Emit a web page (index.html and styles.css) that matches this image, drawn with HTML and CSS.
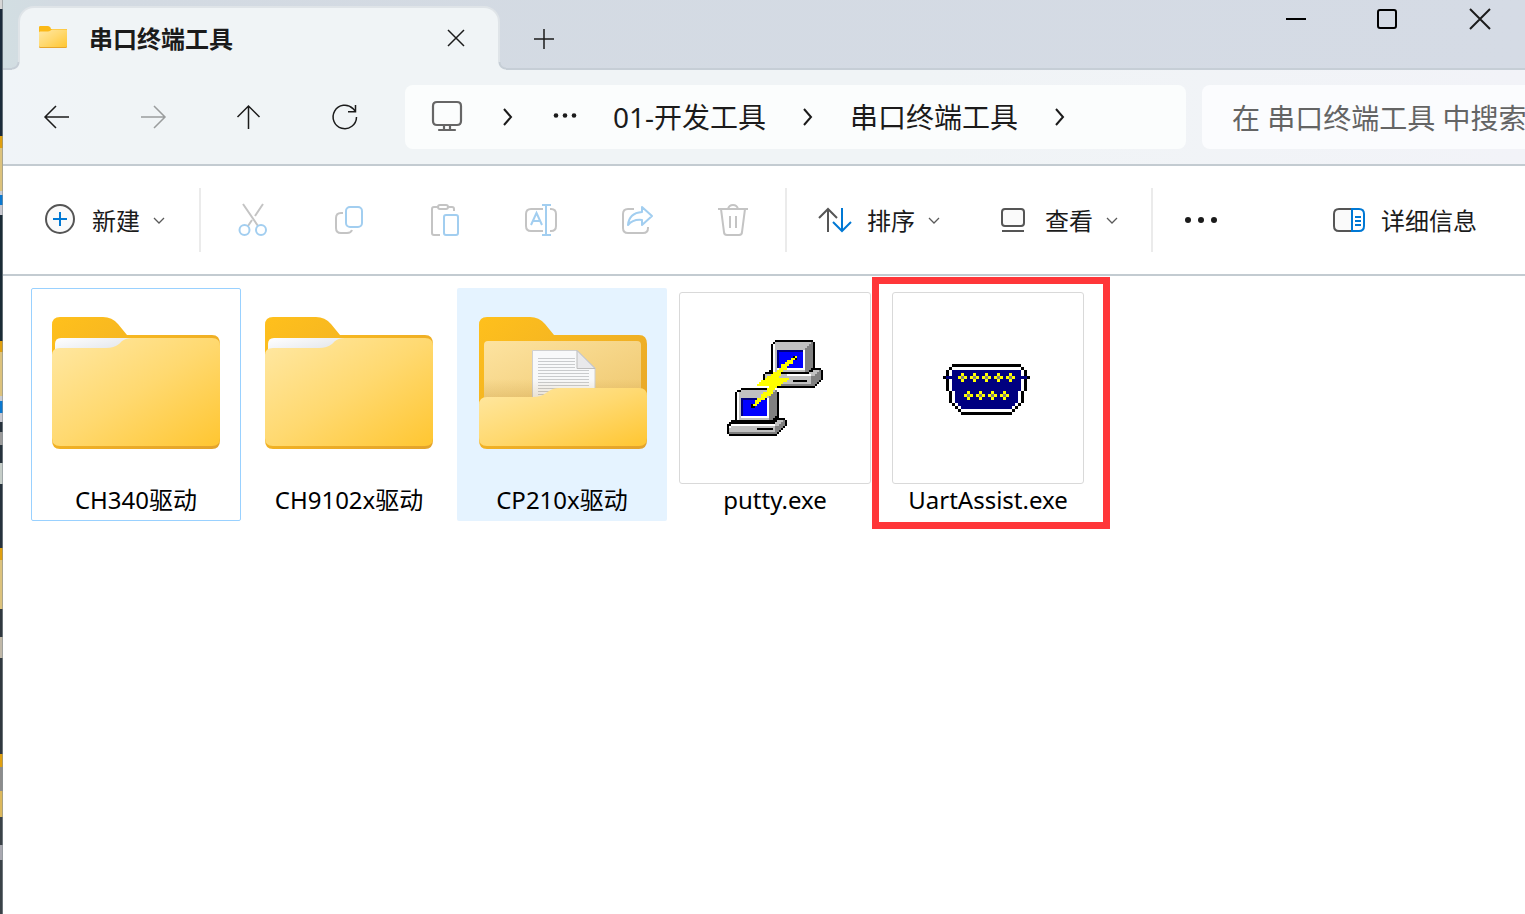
FILE: index.html
```html
<!DOCTYPE html>
<html lang="zh-CN">
<head>
<meta charset="utf-8">
<title>串口终端工具</title>
<link rel="stylesheet" href="styles.css">
</head>
<body>
<svg class="defs" width="0" height="0" aria-hidden="true">
  <defs>
    <linearGradient id="back" x1="0" y1="0" x2="1" y2="1"><stop offset="0" stop-color="#ffc01c"/><stop offset="1" stop-color="#e3a32c"/></linearGradient>
    <linearGradient id="front" x1="0" y1="0" x2="1" y2="1"><stop offset="0" stop-color="#ffe8a4"/><stop offset=".5" stop-color="#ffd970"/><stop offset="1" stop-color="#ffc631"/></linearGradient>
    <linearGradient id="paper" x1="0" y1="0" x2="1" y2="1"><stop offset="0" stop-color="#fff"/><stop offset="1" stop-color="#d9dde4"/></linearGradient>
    <linearGradient id="inner" x1="0" y1="0" x2="1" y2="1"><stop offset="0" stop-color="#fde3a0"/><stop offset="1" stop-color="#eec66c"/></linearGradient>
    <linearGradient id="shade" x1="0" y1="0" x2="0" y2="1"><stop offset="0" stop-color="#a06b10" stop-opacity="0"/><stop offset="1" stop-color="#a06b10" stop-opacity=".2"/></linearGradient>
    <symbol id="folder" viewBox="0 0 192 192">
      <g transform="translate(12 25)">
        <path fill="url(#back)" d="M0 8Q0 0 8 0H51Q60 0 66 7L75 18H160Q168 18 168 27V123Q168 132 160 132H8Q0 132 0 123Z"/>
        <path fill="url(#paper)" d="M3 40V27Q3 21 9 21H80L66 40Z"/>
        <path fill="url(#front)" d="M0 38Q0 31 8 31H54Q62 31 67 27L70 24Q74 21 80 21H160Q168 21 168 29V121Q168 129 160 129H8Q0 129 0 121Z"/>
      </g>
    </symbol>
    <symbol id="folder-open" viewBox="0 0 192 192">
      <g transform="translate(13 25)">
        <path fill="url(#back)" d="M0 8Q0 0 8 0H51Q60 0 66 7L75 18H160Q168 18 168 27V123Q168 132 160 132H8Q0 132 0 123Z"/>
        <rect x="5" y="24" width="157" height="70" rx="4" fill="url(#inner)"/>
        <path fill="#f8f9fa" stroke="#cfcfcf" d="M53.500 33.500H98L116 51V90H53.500Z"/>
        <path stroke="#c9cbcd" stroke-width="1" d="M59 41.500H96M59 44.500H96M59 47.500H96M59 50.500H96M59 53.500H110M59 56.500H110M59 59.500H110M59 62.500H110M59 65.500H110M59 68.500H110M59 71.500H110M59 74.500H110M59 77.500H110"/>
        <path fill="#e9e9eb" stroke="#bdbdbd" d="M98 33.500V51.500H116Z"/>
        <path fill="url(#shade)" d="M5 62H162V84H5Z"/>
        <path fill="url(#front)" d="M0 88Q0 80 8 80H54Q62 80 67 76L70 74Q74 71 80 71H160Q168 71 168 79V121Q168 129 160 129H8Q0 129 0 121Z"/>
      </g>
    </symbol>
    <symbol id="chevron-right" viewBox="0 0 24 24"><path class="line" d="M8 4L15 12L8 20"/></symbol>
    <symbol id="chevron-down" viewBox="0 0 12 12"><path d="M1 4L6 9L11 4" fill="none" stroke="#5a5a5a" stroke-width="1.300"/></symbol>
  </defs>
</svg>
<div class="desktop-edge"></div>
<main class="window">
  <header class="titlebar">
    <div class="tab">
      <svg class="tab-folder" viewBox="12 25 168 133" preserveAspectRatio="none" aria-hidden="true">
        <path fill="#fbb917" d="M12 33Q12 25 20 25H63Q72 25 80 33L84 43H180V100H12Z"/>
        <path fill="#e7a62c" d="M12 100H180V150Q180 158 172 158H20Q12 158 12 150Z"/>
        <path fill="url(#front)" d="M12 65Q12 58 20 58H66Q74 58 79 54L90 46H180V146Q180 152 172 152H20Q12 152 12 146Z"/>
      </svg>
      <h1 class="tab-title">串口终端工具</h1>
      <button class="tab-close" aria-label="关闭标签页"><svg viewBox="0 0 20 20" width="20" height="20"><path class="thin" d="M2 1L18 17M18 1L2 17"/></svg></button>
    </div>
    <button class="tab-new" aria-label="新标签页"><svg viewBox="0 0 20 20" width="20" height="20"><path class="thin" d="M0 10H20M10 0V20"/></svg></button>
    <div class="window-controls">
      <button aria-label="最小化"><svg viewBox="0 0 20 20" width="20" height="20"><path class="control" d="M0 10H20"/></svg></button>
      <button aria-label="最大化"><svg viewBox="0 0 20 20" width="20" height="20"><rect class="control" x="0" y="1" width="18" height="18" rx="2"/></svg></button>
      <button aria-label="关闭"><svg viewBox="0 0 20 20" width="20" height="20"><path class="line" d="M0 0L20 20M20 0L0 20"/></svg></button>
    </div>
  </header>

  <nav class="navbar">
    <div class="nav-buttons">
      <button aria-label="后退"><svg viewBox="0 0 28 28" width="28" height="28"><path class="thin" d="M26 14H2M13 3L2 14L13 25"/></svg></button>
      <button aria-label="前进" disabled><svg viewBox="0 0 28 28" width="28" height="28"><path class="thin" d="M2 14H26M15 3L26 14L15 25"/></svg></button>
      <button aria-label="向上"><svg viewBox="0 0 28 28" width="28" height="28"><path class="thin" d="M13.500 26V3M2.500 14L13.500 3L24.500 14"/></svg></button>
      <button aria-label="刷新"><svg viewBox="0 0 28 28" width="28" height="28"><path class="thin" d="M25.500 14A11.700 11.700 0 1 1 22 5.600L24.500 8.500M24.500 2V8.700H17"/></svg></button>
    </div>
    <div class="address">
      <svg class="pc" viewBox="0 0 30 30" width="30" height="30" aria-hidden="true"><path fill="none" stroke="#666" stroke-width="2.200" stroke-linecap="round" d="M5 0H25Q29 0 29 4V19Q29 23 25 23H5Q1 23 1 19V4Q1 0 5 0ZM12 23V27M18 23V27M7 28H23"/></svg>
      <svg class="crumb-sep" width="24" height="24"><use href="#chevron-right"/></svg>
      <button class="crumb-more" aria-label="更多位置"><svg viewBox="0 0 24 6" width="24" height="6" fill="#1b1b1b"><circle cx="3" cy="1.500" r="2.300"/><circle cx="12" cy="1.500" r="2.300"/><circle cx="21" cy="1.500" r="2.300"/></svg></button>
      <a class="crumb" href="#dev">01-开发工具</a>
      <svg class="crumb-sep" width="24" height="24"><use href="#chevron-right"/></svg>
      <a class="crumb" href="#serial">串口终端工具</a>
      <svg class="crumb-sep" width="24" height="24"><use href="#chevron-right"/></svg>
    </div>
    <input class="search" type="text" aria-label="搜索" placeholder="在 串口终端工具 中搜索">
  </nav>

  <div class="toolbar">
    <button class="command new">
      <svg viewBox="0 0 32 32" width="32" height="32"><circle cx="16" cy="15" r="14" fill="#fafafa" stroke="#555" stroke-width="2"/><path stroke="#0078d4" stroke-width="2" d="M9 15H23M16 8V22"/></svg>
      <span>新建</span><svg class="arrow" width="12" height="12"><use href="#chevron-down"/></svg>
    </button>
    <div class="divider"></div>
    <div class="actions">
      <button aria-label="剪切" disabled><svg viewBox="0 0 32 32" width="32" height="32"><path class="g" d="M6 0L21 22M26 0L18 12M15 16L11 22"/><circle class="b" cx="7.500" cy="26" r="5"/><circle class="b" cx="24" cy="26" r="5"/></svg></button>
      <button aria-label="复制" disabled><svg viewBox="0 0 32 32" width="32" height="32"><path class="g" d="M10 9H8Q3 9 3 14V24Q3 29 8 29H14Q18 29 19 26"/><rect class="b" x="13" y="3" width="16" height="20" rx="4"/></svg></button>
      <button aria-label="粘贴" disabled><svg viewBox="0 0 32 32" width="32" height="32"><path class="g" d="M11 31H5Q3 31 3 29V5Q3 3 5 3H9M19 3H23Q25 3 25 5V7"/><rect class="g" x="9" y="1" width="10" height="4" rx="2"/><rect class="b" x="15" y="11" width="14" height="20" rx="2"/></svg></button>
      <button aria-label="重命名" disabled><svg viewBox="0 0 32 32" width="32" height="32"><path class="g" d="M18 5H6Q1 5 1 10V22Q1 27 6 27H18M25 5H26Q31 5 31 10V22Q31 27 26 27H25"/><path class="b" d="M21 1V31M17 1H26M17 31H26M6 21L11.500 9L17 21M8 17H15"/></svg></button>
      <button aria-label="共享" disabled><svg viewBox="0 0 32 32" width="32" height="32"><path class="g" d="M13 5H7Q2 5 2 10V24Q2 29 7 29H22Q27 29 27 24V23"/><path class="b" stroke-linejoin="round" d="M21 3L31 12L21 21V16Q12 15 7 21Q8 9 21 8Z"/></svg></button>
      <button aria-label="删除" disabled><svg viewBox="0 0 32 32" width="32" height="32"><path class="g" d="M1 5H31M11 5Q12 1 16 1T21 5M4 5L7 28Q7 31 10 31H22Q25 31 25 28L28 5M13 12V24M19 12V24"/></svg></button>
    </div>
    <div class="divider"></div>
    <button class="command sort">
      <svg viewBox="0 0 32 32" width="32" height="32"><path fill="none" stroke="#555" stroke-width="2" d="M9 28V5M0 14L9 5L18 14"/><path fill="none" stroke="#0078d4" stroke-width="2" d="M23 4V27M14 18L23 27L32 18"/></svg>
      <span>排序</span><svg class="arrow" width="12" height="12"><use href="#chevron-down"/></svg>
    </button>
    <button class="command view">
      <svg viewBox="0 0 32 32" width="32" height="32"><rect x="5" y="5" width="22" height="17" rx="3" fill="#fafafa" stroke="#555" stroke-width="2"/><path stroke="#555" stroke-width="2" d="M5 27H27"/></svg>
      <span>查看</span><svg class="arrow" width="12" height="12"><use href="#chevron-down"/></svg>
    </button>
    <div class="divider"></div>
    <button class="more" aria-label="查看更多"><svg viewBox="0 0 32 8" width="32" height="8" fill="#1b1b1b"><circle cx="3" cy="4" r="3"/><circle cx="16" cy="4" r="3"/><circle cx="29" cy="4" r="3"/></svg></button>
    <button class="command details">
      <svg viewBox="0 0 32 32" width="32" height="32" fill="none" stroke-width="2"><path fill="#fafafa" stroke="#555" d="M19 5H6Q1 5 1 10V22Q1 27 6 27H19"/><path stroke="#0078d4" d="M19 5H26Q31 5 31 10V22Q31 27 26 27H19ZM22 13H28M22 17H28M22 21H28"/></svg>
      <span>详细信息</span>
    </button>
  </div>

  <section class="files" aria-label="文件">
    <figure class="file focused"><svg class="thumb"><use href="#folder"/></svg><figcaption>CH340驱动</figcaption></figure>
    <figure class="file"><svg class="thumb"><use href="#folder"/></svg><figcaption>CH9102x驱动</figcaption></figure>
    <figure class="file hovered"><svg class="thumb"><use href="#folder-open"/></svg><figcaption>CP210x驱动</figcaption></figure>
    <figure class="file">
      <div class="thumb framed">
        <svg viewBox="0 0 48 48" width="96" height="96" shape-rendering="crispEdges">
          <path fill="#000" d="M24 0H43V1H44V14H47V15H48V20H47V21H46V22H45V23H44V24H22V22H18V17H19V16H21V15H22V2H23V1H24Z"/>
          <path fill="#c0c0c0" d="M24 1H42V2H41V3H40V16H23V2H24Z"/>
          <path fill="#808080" d="M42 1H43V14H42V15H41V16H39V4H40V3H41V2H42Z"/>
          <path fill="#fff" d="M23 2H24V16H23ZM38 5H39V15H25V14H38Z"/>
          <path fill="#000080" d="M25 5H38V14H25Z"/><path fill="#00f" d="M26 6H38V14H26Z"/>
          <path fill="#c0c0c0" d="M19 17H41V16H43V15H46V16H45V17H44V18H43V22H19Z"/>
          <path fill="#808080" d="M46 15H47V20H46V21H45V22H44V23H25V22H42V18H44V17H45V16H46Z"/>
          <path fill="#fff" d="M30 17H42V18H30Z"/><path fill="#000" d="M33 20H40V21H33Z"/>
          <path fill="#000" d="M7 24H24V25H25V26H26V39H29V40H30V43H29V44H28V45H27V46H26V47H25V48H1V47H0V42H1V41H2V40H4V26H5V25H7Z"/>
          <path fill="#c0c0c0" d="M7 25H24V26H23V27H22V40H5V26H7Z"/>
          <path fill="#808080" d="M24 25H25V38H24V39H23V40H21V28H22V27H23V26H24Z"/>
          <path fill="#fff" d="M5 26H6V40H5ZM20 29H21V39H7V38H20Z"/>
          <path fill="#000080" d="M7 29H20V38H7Z"/><path fill="#00f" d="M8 30H20V38H8Z"/>
          <path fill="#c0c0c0" d="M2 42H24V41H25V40H28V41H27V42H26V43H25V46H1V43H2Z"/>
          <path fill="#808080" d="M28 40H29V43H28V44H27V45H26V46H25V47H1V46H24V43H26V42H27V41H28Z"/>
          <path fill="#fff" d="M2 42H24V43H2V44H1V43H2Z"/><path fill="#000" d="M15 44H23V45H15Z"/>
          <path fill="#ff0" d="M33 8H35V10H33V12H31V13H30V15H28V16H27V18H26V19H31V20H30V21H28V22H27V23H25V24H24V25H23V27H22V28H20V29H19V30H17V31H16V32H15V33H14V34H12V32H14V30H15V29H17V27H18V26H20V24H21V23H15V22H16V21H17V20H19V19H20V18H22V17H23V16H25V15H26V14H27V12H29V11H30V10H32V9H33Z"/>
          <path fill="#000" d="M33 8H34V9H33ZM34 9H35V10H34ZM12 32H13V33H14V34H12Z"/>
        </svg>
      </div>
      <figcaption>putty.exe</figcaption>
    </figure>
    <figure class="file marked">
      <div class="thumb framed">
        <svg viewBox="0 -1 30 18" width="90" height="54" shape-rendering="crispEdges">
          <path fill="#000" d="M3 0H26V1H27V2H28V4H29V5H28V9H27V13H26V14H25V15H24V16H23V17H6V16H5V15H4V14H3V13H2V9H1V5H0V4H1V2H2V1H3Z"/>
          <path fill="#fff" d="M3 1H26V2H27V9H26V13H25V14H24V15H23V16H6V15H5V14H4V13H3V9H2V2H3Z"/>
          <path fill="#000080" d="M3 2H26V4H28V5H26V9H25V13H24V14H23V15H6V14H5V13H4V9H3V5H1V4H3Z"/>
          <path fill="#ff0" d="M6 3H7V4H8V5H7V6H6V5H5V4H6ZM10 3H11V4H12V5H11V6H10V5H9V4H10ZM14 3H15V4H16V5H15V6H14V5H13V4H14ZM18 3H19V4H20V5H19V6H18V5H17V4H18ZM22 3H23V4H24V5H23V6H22V5H21V4H22ZM8 9H9V10H10V11H9V12H8V11H7V10H8ZM12 9H13V10H14V11H13V12H12V11H11V10H12ZM16 9H17V10H18V11H17V12H16V11H15V10H16ZM20 9H21V10H22V11H21V12H20V11H19V10H20Z"/>
          <path fill="#808080" d="M6 4H7V5H6ZM10 4H11V5H10ZM14 4H15V5H14ZM18 4H19V5H18ZM22 4H23V5H22ZM8 10H9V11H8ZM12 10H13V11H12ZM16 10H17V11H16ZM20 10H21V11H20Z"/>
        </svg>
      </div>
      <figcaption>UartAssist.exe</figcaption>
    </figure>
  </section>
</main>
</body>
</html>
```

FILE: styles.css
```css
* { box-sizing: border-box; }

body {
  margin: 0;
  min-height: 100vh;
  display: flex;
  overflow: hidden;
  background: #d4dbe3;
  color: #1b1b1b;
  font-family: "Noto Sans", "Noto Sans CJK SC", sans-serif;
  font-size: 24px;
}

button {
  border: 0;
  padding: 0;
  background: none;
  color: inherit;
  font: inherit;
  display: flex;
  align-items: center;
  justify-content: center;
}

svg { display: block; flex: none; overflow: visible; }
.defs { position: absolute; }

.thin, .line, .control { fill: none; stroke: #1b1b1b; }
.thin { stroke-width: 1.5; }
.line { stroke-width: 2; }
.control { stroke: #000; stroke-width: 2; }

.desktop-edge {
  flex: 0 0 3px;
  border-right: 1px solid #8a9298a0;
  background: linear-gradient(
    #d6d6d6 0 9px, #1b2b3b 9px 136px, #e0a010 136px 148px, #dcc27c 148px 191px,
    #c8ccd4 191px 195px, #0a78d0 195px 205px, #c8c8d0 205px 215px, #1b2b36 215px 341px,
    #e0a010 341px 352px, #dcc27c 352px 396px, #c8ccd4 396px 401px, #0a78d0 401px 413px,
    #c8c8d0 413px 422px, #26323c 422px 432px, #9a9a9a 432px 445px, #26323c 445px 463px,
    #c5cdc8 463px 484px, #26323c 484px 548px, #e0a010 548px 560px, #dcc27c 560px 609px,
    #30383f 609px 637px, #c0b8a8 637px 658px, #30383f 658px 754px, #e0a010 754px 767px,
    #8c8c8c 767px 791px, #dcb85c 791px 817px, #3a4248 817px 845px, #a8a8b0 845px 860px,
    #3a4248 860px);
}

.window {
  flex: 1;
  min-width: 0;
  display: flex;
  flex-direction: column;
  background: #fff;
}

.titlebar {
  height: 70px;
  padding: 6px 0 0 15px;
  display: flex;
  align-items: stretch;
  background: linear-gradient(90deg, #d2dee2, #d3dae2 60px, #d5dbe5);
  border-bottom: 2px solid #c6ced6;
}

.tab {
  position: relative;
  width: 482px;
  margin-bottom: -2px;
  padding: 0 32px 0 19px;
  display: flex;
  align-items: center;
  background: #f0f4f6;
  border: 2px solid #dfe4e8;
  border-bottom: 0;
  border-radius: 16px 16px 0 0;
}

.tab::before, .tab::after {
  content: "";
  position: absolute;
  bottom: 0;
  width: 8px;
  height: 8px;
}
.tab::before { right: 100%; background: radial-gradient(circle at 0 0, transparent 5px, #c6ced6 6px 7px, #f0f4f6 8px); }
.tab::after { left: 100%; background: radial-gradient(circle at 100% 0, transparent 5px, #c6ced6 6px 7px, #f0f4f6 8px); }

.tab-folder { width: 28px; height: 22px; margin-bottom: 4px; }
.tab-title { margin: 0 auto 0 22px; font-size: 24px; line-height: 32px; font-weight: 700; }
.tab-close, .tab-new { width: 20px; }
.tab-new { margin-left: 34px; padding-top: 4px; }

.window-controls { display: flex; gap: 72px; margin-left: auto; padding: 3px 35px 0 0; align-items: flex-start; }

.navbar {
  height: 96px;
  padding: 0 0 0 22px;
  display: flex;
  align-items: center;
  background: linear-gradient(90deg, #f0f4f8, #f0f4f6 100px, #f0f4f6 60%, #f2f3f8);
  border-bottom: 2px solid #c3cbd1;
}

.nav-buttons { display: flex; gap: 32px; margin-right: 28px; }
.nav-buttons button { width: 64px; height: 64px; }
.nav-buttons button:disabled { opacity: .4; }

.address {
  flex: 1;
  min-width: 0;
  height: 64px;
  margin-right: 16px;
  padding-left: 27px;
  display: flex;
  align-items: center;
  background: #fbfdfd;
  border-radius: 8px;
}
.crumb-sep { margin: 0 30px; }
.pc + .crumb-sep { margin: 0 33px 0 34px; }
.crumb-more { margin-right: 36px; height: 32px; }
.crumb { color: inherit; text-decoration: none; font-size: 28px; line-height: 40px; white-space: nowrap; }

.search {
  flex: 0 0 323px;
  min-width: 0;
  height: 64px;
  margin: 0;
  padding: 2px 0 0 30px;
  border: 0;
  border-radius: 8px 0 0 8px;
  background: #fbfcfe;
  font: inherit;
  font-size: 28px;
}
.search::placeholder { color: #646464; opacity: 1; }

.toolbar {
  height: 110px;
  padding: 0 48px 0 41px;
  display: flex;
  align-items: center;
  border-bottom: 2px solid #c3cbd1;
}
.command { gap: 16px; line-height: 32px; white-space: nowrap; }
.command span { padding-top: 2px; }
.command .arrow { margin-left: -3px; }
.divider { width: 2px; height: 64px; background: #ebebeb; }
.new { margin-right: 34px; }
.actions { display: flex; gap: 64px; margin: 0 36px; }
.sort { margin: 0 57px 0 32px; }
.view { margin-right: 33px; }
.more { margin-left: 32px; }
.details { margin-left: auto; }
.g, .b { fill: none; stroke-width: 2; }
.g { stroke: #c4c4c4; }
.b { stroke: #a2cef0; }

.files { display: flex; flex-wrap: wrap; gap: 3px; padding: 12px 28px; }
.file {
  position: relative;
  width: 210px;
  margin: 0;
  padding: 3px 0 5px;
  display: flex;
  flex-direction: column;
  align-items: center;
  border: 1px solid transparent;
  border-radius: 2px;
  color: #000;
}
.focused { border-color: #99d1ff; }
.hovered { background: #e5f3ff; }
.thumb { width: 192px; height: 192px; }
.framed {
  display: flex;
  align-items: center;
  justify-content: center;
  border: 1px solid #d9d9d9;
  border-radius: 3px;
  background: #fff;
}
figcaption { line-height: 31px; white-space: nowrap; }
.marked::after {
  content: "";
  position: absolute;
  inset: -12px -18px -9px -12px;
  border: 7px solid #ff3639;
}
```
